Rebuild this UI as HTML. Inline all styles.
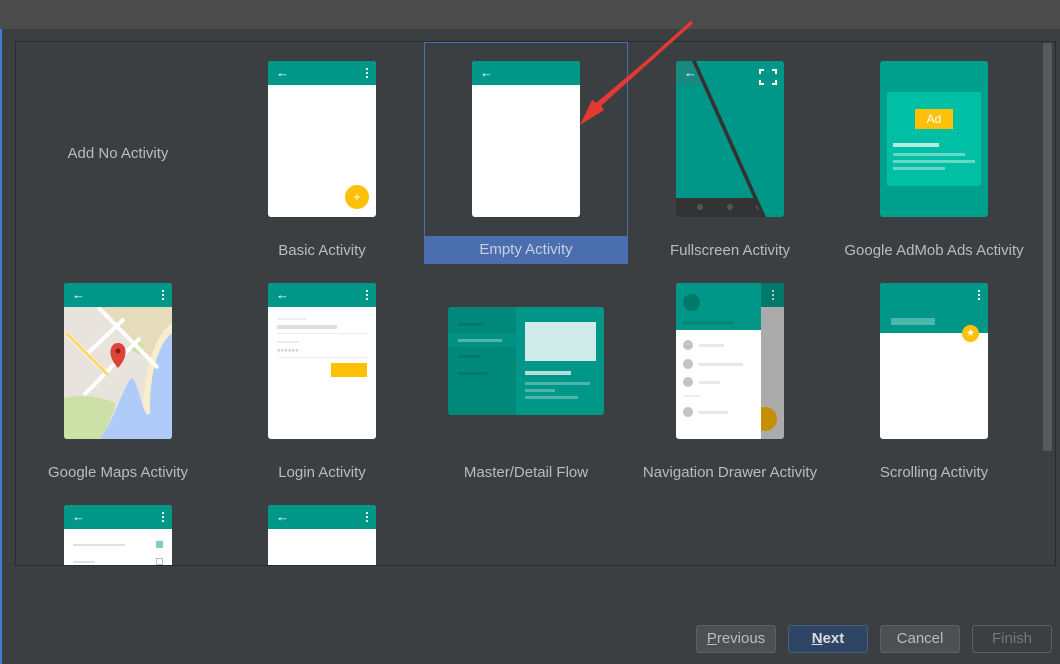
<!DOCTYPE html>
<html><head><meta charset="utf-8"><style>
*{margin:0;padding:0;box-sizing:border-box}
body{width:1060px;height:664px;background:#3c3f41;font-family:"Liberation Sans",sans-serif;position:relative;overflow:hidden}
.abs{position:absolute}
.top{left:0;top:0;width:1060px;height:29px;background:#4b4b4b}
.panel{left:15px;top:41px;width:1041px;height:525px;border:1px solid #2b2b2b;background:#3c3f41;overflow:hidden}
.card{position:absolute;width:108px;height:156px;background:#fff;border-radius:3px;overflow:hidden}
.bar{position:absolute;left:0;top:0;width:100%;height:24px;background:#009688}
.lbl{position:absolute;width:204px;text-align:center;color:#bbbbbb;font-size:15px}
.back{position:absolute;left:8px;top:5px;color:#fff;font-size:13px;line-height:13px}
.dots{position:absolute;right:8px;top:6px;width:2px;height:12px;background:radial-gradient(circle,#fff 1px,transparent 1.2px) 0 0/2px 4px}
.btn{position:absolute;top:625px;height:28px;width:80px;border:1px solid #5e6060;border-radius:3px;background:#4c5052;color:#bbb;font-size:15px;text-align:center;line-height:26px}
</style></head><body>
<div class="abs" style="left:0;top:0;width:2px;height:664px;background:#3d7ecf"></div>
<div class="abs top"></div>
<div class="abs panel">
</div>
<div class="abs" style="left:1043px;top:43px;width:9px;height:408px;background:#5a5a5a;border-radius:2px"></div>
<div class="abs" style="left:424px;top:42px;width:204px;height:222px;border:1px solid #4b6eaf"></div>
<div class="abs" style="left:424px;top:236px;width:204px;height:28px;background:#4b6eaf"></div>

<div class="lbl" style="left:16px;top:145px">Add No Activity</div>

<div class="card" style="left:268px;top:61px"><div class="bar"></div><div class="back">←</div><div class="dots"></div>
<div class="abs" style="left:77px;top:124px;width:24px;height:24px;border-radius:50%;background:#ffc107;color:#fff;font-size:12px;text-align:center;line-height:24px">+</div></div>
<div class="lbl" style="left:220px;top:242px">Basic Activity</div>
<div class="card" style="left:472px;top:61px"><div class="bar"></div><div class="back">←</div></div>
<div class="lbl" style="left:424px;top:241px;color:#c8d0e0">Empty Activity</div>
<div class="card" style="left:676px;top:61px;background:#009688">
<svg width="108" height="156" style="position:absolute;left:0;top:0">
<rect x="0" y="0" width="26" height="24" fill="#178a7f"/>
<rect x="0" y="137" width="108" height="19" fill="#333"/>
<circle cx="24" cy="146" r="3" fill="#555"/><circle cx="54" cy="146" r="3" fill="#555"/><circle cx="83" cy="146" r="3" fill="#555"/>
<polygon points="16,0 20,0 92,156 86,156" fill="#333"/>
<polygon points="20,0 108,0 108,156 90,156" fill="#009688"/>
<path d="M84 13v-4h4M96 9h4v4M100 19v4h-4M88 23h-4v-4" stroke="#fff" stroke-width="2" fill="none"/>
</svg><div class="back">←</div></div>
<div class="lbl" style="left:628px;top:242px">Fullscreen Activity</div>
<div class="card" style="left:880px;top:61px;background:#00a08e">
<div class="abs" style="left:7px;top:31px;width:94px;height:94px;background:#00bfa5;border-radius:2px"></div>
<div class="abs" style="left:35px;top:48px;width:38px;height:20px;background:#ffc107;color:#fff;font-size:12px;text-align:center;line-height:20px">Ad</div>
<div class="abs" style="left:13px;top:82px;width:46px;height:4px;background:#b2ebe2"></div>
<div class="abs" style="left:13px;top:92px;width:72px;height:3px;background:#66d8c7"></div>
<div class="abs" style="left:13px;top:99px;width:82px;height:3px;background:#66d8c7"></div>
<div class="abs" style="left:13px;top:106px;width:52px;height:3px;background:#66d8c7"></div>
</div>
<div class="lbl" style="left:832px;top:242px">Google AdMob Ads Activity</div>

<div class="card" style="left:64px;top:283px;background:#e8e4dd">
<svg width="108" height="156" style="position:absolute;left:0;top:0">
<polygon points="34,24 108,24 108,110 80,70" fill="#e6dcbb"/>
<path d="M108 40 C80 60,80 120,76 140 L108 140Z" fill="#f7efcb"/>
<path d="M108 50 C95 60,85 90,86 130 C80 140,75 100,68 95 C60 100,50 140,35 156 L108 156Z" fill="#aecbfa"/>
<path d="M0 115 C20 110,40 115,52 120 C48 135,40 150,36 156 L0 156Z" fill="#cde0a8"/>
<path d="M64 65 L70 55 L80 62 L76 72Z" fill="#cde0a8"/>
<path d="M34 24 L94 85 M2 50 L44 92 M24 70 L60 36 M20 112 L76 55" stroke="#fff" stroke-width="4"/>
<path d="M2 50 L44 92" stroke="#fdd663" stroke-width="3"/>
<path d="M54 85 C42 72,46 60,54 60 C62 60,66 72,54 85Z" fill="#db4437"/><circle cx="54" cy="68" r="2.5" fill="#8b1a12"/>
</svg><div class="bar"></div><div class="back">←</div><div class="dots"></div></div>
<div class="lbl" style="left:16px;top:464px">Google Maps Activity</div>
<div class="card" style="left:268px;top:283px"><div class="bar"></div><div class="back">←</div><div class="dots"></div>
<div class="abs" style="left:9px;top:35px;width:30px;height:2px;background:#eee"></div>
<div class="abs" style="left:9px;top:42px;width:60px;height:4px;background:#e0e0e0"></div>
<div class="abs" style="left:9px;top:50px;width:90px;height:1px;background:#eee"></div>
<div class="abs" style="left:9px;top:58px;width:22px;height:2px;background:#eee"></div>
<div class="abs" style="left:9px;top:65px;font-size:6px;color:#ccc;letter-spacing:0px">●●●●●●</div>
<div class="abs" style="left:9px;top:74px;width:90px;height:1px;background:#eee"></div>
<div class="abs" style="left:63px;top:80px;width:36px;height:14px;background:#ffc107"></div>
</div>
<div class="lbl" style="left:220px;top:464px">Login Activity</div>
<div class="abs" style="left:448px;top:307px;width:156px;height:108px;background:#009688;border-radius:3px;overflow:hidden">
<div class="abs" style="left:0;top:0;width:68px;height:108px;background:#00897b"></div>
<div class="abs" style="left:0;top:26px;width:68px;height:14px;background:#009184"></div>
<div class="abs" style="left:10px;top:16px;width:25px;height:3px;background:#00796b"></div>
<div class="abs" style="left:10px;top:32px;width:44px;height:3px;background:#4db6ac"></div>
<div class="abs" style="left:10px;top:48px;width:22px;height:3px;background:#00796b"></div>
<div class="abs" style="left:10px;top:65px;width:29px;height:3px;background:#00796b"></div>
<div class="abs" style="left:77px;top:15px;width:71px;height:39px;background:#d0ebea"></div>
<div class="abs" style="left:77px;top:64px;width:46px;height:4px;background:#b2dfdb"></div>
<div class="abs" style="left:77px;top:75px;width:65px;height:3px;background:#4db6ac"></div>
<div class="abs" style="left:77px;top:82px;width:30px;height:3px;background:#4db6ac"></div>
<div class="abs" style="left:77px;top:89px;width:53px;height:3px;background:#4db6ac"></div>
</div>
<div class="lbl" style="left:424px;top:464px">Master/Detail Flow</div>
<div class="card" style="left:676px;top:283px;background:#ababab">
<div class="abs" style="left:85px;top:0;width:23px;height:24px;background:#00796b"></div>
<div class="abs" style="left:96px;top:6px;width:2px;height:12px;background:radial-gradient(circle,#ccc 1px,transparent 1.2px) 0 0/2px 4px"></div>
<div class="abs" style="left:77px;top:124px;width:24px;height:24px;border-radius:50%;background:#c49000"></div>
<div class="abs" style="left:0;top:0;width:85px;height:156px;background:#fff"></div>
<div class="abs" style="left:0;top:0;width:85px;height:47px;background:#009688"></div>
<div class="abs" style="left:7px;top:11px;width:17px;height:17px;border-radius:50%;background:#00796b"></div>
<div class="abs" style="left:7px;top:38px;width:51px;height:4px;background:#00897b"></div>
<div class="abs" style="left:7px;top:57px;width:10px;height:10px;border-radius:50%;background:#c4c4c4"></div><div class="abs" style="left:23px;top:61px;width:25px;height:3px;background:#e8e8e8"></div>
<div class="abs" style="left:7px;top:76px;width:10px;height:10px;border-radius:50%;background:#c4c4c4"></div><div class="abs" style="left:23px;top:80px;width:44px;height:3px;background:#e8e8e8"></div>
<div class="abs" style="left:7px;top:94px;width:10px;height:10px;border-radius:50%;background:#c4c4c4"></div><div class="abs" style="left:23px;top:98px;width:21px;height:3px;background:#e8e8e8"></div>
<div class="abs" style="left:7px;top:112px;width:18px;height:2px;background:#eee"></div>
<div class="abs" style="left:7px;top:124px;width:10px;height:10px;border-radius:50%;background:#c4c4c4"></div><div class="abs" style="left:23px;top:128px;width:29px;height:3px;background:#e8e8e8"></div>
</div>
<div class="lbl" style="left:628px;top:464px">Navigation Drawer Activity</div>
<div class="card" style="left:880px;top:283px"><div class="abs" style="left:0;top:0;width:108px;height:50px;background:#009688"></div><div class="dots"></div>
<div class="abs" style="left:11px;top:35px;width:44px;height:7px;background:#4db6ac"></div>
<div class="abs" style="left:82px;top:42px;width:17px;height:17px;border-radius:50%;background:#ffc107;color:#fff;font-size:10px;text-align:center;line-height:17px">★</div></div>
<div class="lbl" style="left:832px;top:464px">Scrolling Activity</div>

<div class="abs" style="left:16px;top:500px;width:1026px;height:65px;overflow:hidden">
<div class="card" style="left:48px;top:5px"><div class="bar"></div><div class="back">←</div><div class="dots"></div>
<div class="abs" style="left:9px;top:39px;width:52px;height:2px;background:#e0e0e0"></div>
<div class="abs" style="left:92px;top:36px;width:7px;height:7px;background:#80cbc4"></div>
<div class="abs" style="left:9px;top:56px;width:22px;height:2px;background:#e0e0e0"></div>
<div class="abs" style="left:92px;top:53px;width:7px;height:7px;border:1px solid #bbb"></div></div>
<div class="card" style="left:252px;top:5px"><div class="bar"></div><div class="back">←</div><div class="dots"></div></div>
</div>
<div class="abs" style="left:15px;top:565px;width:1041px;height:1px;background:#2b2b2b"></div>

<svg class="abs" style="left:0;top:0" width="1060" height="664">
<polygon points="692,22 600,104 604,110 580,125 592,100 596,103" fill="#e53935"/>
<path d="M692 22 L596 108" stroke="#e53935" stroke-width="3.5"/>
</svg>

<div class="btn" style="left:696px"><u>P</u>revious</div>
<div class="btn" style="left:788px;background:#2f4565;border-color:#4a5f80;color:#ddd;font-weight:bold"><u>N</u>ext</div>
<div class="btn" style="left:880px">Cancel</div>
<div class="btn" style="left:972px;background:#3c3f41;color:#777">Finish</div>
</body></html>
